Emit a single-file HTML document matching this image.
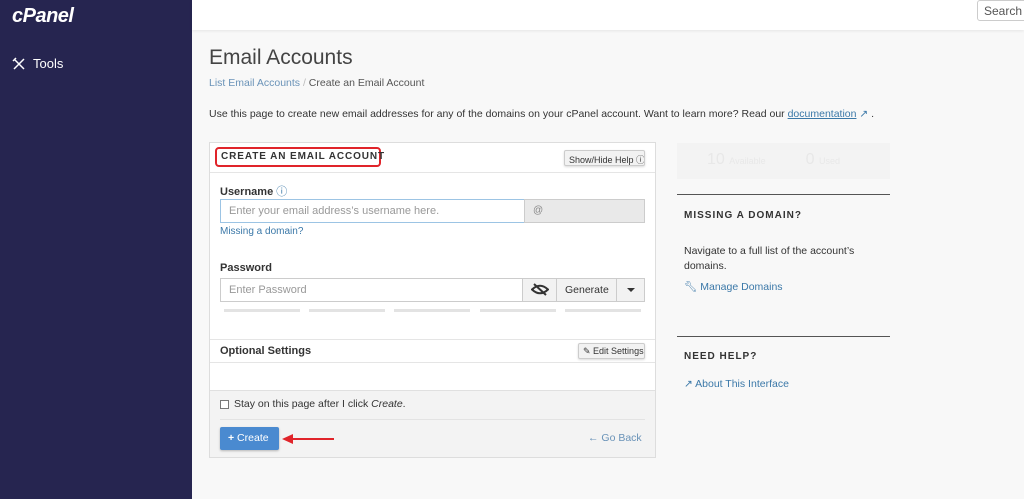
<!DOCTYPE html>
<html><head><meta charset="utf-8"><style>
*{box-sizing:border-box;margin:0;padding:0}
body{width:1024px;height:499px;overflow:hidden;font-family:"Liberation Sans",sans-serif;background:#f8f8f8;position:relative;color:#333}
.a{position:absolute;white-space:nowrap}
.side{left:0;top:0;width:192px;height:499px;background:#262550}
.top{left:192px;top:0;width:832px;height:30px;background:#fff;box-shadow:0 1px 3px rgba(0,0,0,.08)}
.link{color:#3b78a8}
.card{left:209px;top:142px;width:447px;height:316px;background:#fff;border:1px solid #ddd}
.inp{border:1px solid #ccc;height:24px;font-size:11px;color:#999;padding:5px 8px}
.btn{border:1px solid #ccc;background:#f2f2f2;font-size:9px;color:#333;border-radius:2px;box-shadow:0 1px 2px rgba(0,0,0,.15);overflow:hidden}
.bar{height:3px;background:#e3e3e3;top:309px;width:76px}
h5{font-size:10px;letter-spacing:1px;font-weight:bold;color:#333}
</style></head><body>
<div class="a side"></div>
<div class="a" style="left:12px;top:5px;color:#fff;font-size:20px;font-weight:bold;font-style:italic;letter-spacing:-0.5px">cPanel</div>
<svg class="a" style="left:12px;top:57px" width="14" height="14" viewBox="0 0 14 14" stroke="#fff" stroke-width="1.5" fill="none"><path d="M2 12L12 2M2 2l10 10M1 4l3-3"/></svg>
<div class="a" style="left:33px;top:56px;color:#fff;font-size:13px">Tools</div>
<div class="a top"></div>
<div class="a" style="left:977px;top:0;width:60px;height:21px;border:1px solid #ccc;border-radius:3px;background:#fff;font-size:12px;color:#555;padding:3px 6px;overflow:hidden">Search T</div>
<div class="a" style="left:209px;top:46px;font-size:21px;color:#444">Email Accounts</div>
<div class="a" style="left:209px;top:77px;font-size:10.5px;color:#555"><span class="link" style="color:#6a93b8">List Email Accounts</span> <span style="color:#bbb">/</span> Create an Email Account</div>
<div class="a" style="left:209px;top:108px;font-size:10.5px;color:#333">Use this page to create new email addresses for any of the domains on your cPanel account. Want to learn more? Read our <span class="link" style="text-decoration:underline">documentation</span> <span class="link">↗</span> .</div>
<div class="a card"></div>
<div class="a" style="left:210px;top:172px;width:445px;height:1px;background:#e5e5e5"></div>
<div class="a" style="left:215px;top:147px;width:166px;height:20px;border:2px solid #e0242a;border-radius:4px"></div>
<h5 class="a" style="left:221px;top:151px;letter-spacing:0.9px">CREATE AN EMAIL ACCOUNT</h5>
<div class="a btn" style="left:564px;top:150px;width:81px;height:16px;padding:2px 4px">Show/Hide Help ⓘ</div>
<div class="a" style="left:220px;top:183px;font-size:11px;font-weight:bold">Username <span style="color:#3b78a8;font-weight:normal">ⓘ</span></div>
<div class="a inp" style="left:220px;top:199px;width:305px;border-color:#9cc4e4">Enter your email address’s username here.</div>
<div class="a" style="left:524px;top:199px;width:121px;height:24px;background:#e9e9e9;border:1px solid #ccc;font-size:10px;color:#888;padding:5px 8px">@</div>
<div class="a link" style="left:220px;top:226px;font-size:10px">Missing a domain?</div>
<div class="a" style="left:220px;top:262px;font-size:11px;font-weight:bold">Password</div>
<div class="a inp" style="left:220px;top:278px;width:303px">Enter Password</div>
<div class="a" style="left:522px;top:278px;width:123px;height:24px;border:1px solid #ccc;background:#f2f2f2"></div>
<div class="a" style="left:556px;top:278px;width:1px;height:24px;background:#ccc"></div>
<div class="a" style="left:616px;top:278px;width:1px;height:24px;background:#ccc"></div>
<svg class="a" style="left:531px;top:283px" width="18" height="13" viewBox="0 0 18 13"><path d="M1 6.5Q9 -1 17 6.5Q9 14 1 6.5Z" fill="none" stroke="#333" stroke-width="2"/><path d="M3 1l12 11" stroke="#333" stroke-width="2"/></svg>
<div class="a" style="left:565px;top:284px;font-size:10.5px">Generate</div>
<div class="a" style="left:627px;top:288px;border:4px solid transparent;border-top:4px solid #333"></div>
<div class="a bar" style="left:224px"></div><div class="a bar" style="left:309px"></div><div class="a bar" style="left:394px"></div><div class="a bar" style="left:480px"></div><div class="a bar" style="left:565px"></div>
<div class="a" style="left:210px;top:339px;width:445px;height:1px;background:#e5e5e5"></div>
<div class="a" style="left:220px;top:345px;font-size:11px;font-weight:bold">Optional Settings</div>
<div class="a btn" style="left:578px;top:343px;width:67px;height:16px;padding:2px 4px">✎ Edit Settings</div>
<div class="a" style="left:210px;top:362px;width:445px;height:1px;background:#e5e5e5"></div>
<div class="a" style="left:210px;top:390px;width:445px;height:67px;background:#f3f3f3;border-top:1px solid #e0e0e0"></div>
<div class="a" style="left:220px;top:400px;width:9px;height:9px;border:1px solid #777;background:#fff"></div>
<div class="a" style="left:234px;top:398px;font-size:10.5px">Stay on this page after I click <i>Create</i>.</div>
<div class="a" style="left:220px;top:419px;width:425px;height:1px;background:#e3e3e3"></div>
<div class="a" style="left:220px;top:427px;width:59px;height:23px;background:#4a8ad0;border-radius:2px;color:#fff;font-size:10.5px;padding:5px 8px;box-shadow:0 1px 2px rgba(0,0,0,.25)"><b>+</b> Create</div>
<svg class="a" style="left:282px;top:433px" width="54" height="12" viewBox="0 0 54 12"><path d="M52 6H8" stroke="#e0242a" stroke-width="2"/><path d="M0 6L11 1V11Z" fill="#e0242a"/></svg>
<div class="a link" style="left:588px;top:432px;font-size:10.5px;color:#6a93b8">← Go Back</div>
<div class="a" style="left:677px;top:143px;width:213px;height:36px;background:#f3f3f3;font-size:16px;color:#e8e8e8;padding:8px 30px">10 <span style="font-size:9px">Available</span>&nbsp;&nbsp;&nbsp;&nbsp;&nbsp;&nbsp;&nbsp;&nbsp;&nbsp;0 <span style="font-size:9px">Used</span></div>
<div class="a" style="left:677px;top:194px;width:213px;height:1px;background:#555"></div>
<h5 class="a" style="left:684px;top:210px">MISSING A DOMAIN?</h5>
<div class="a" style="left:684px;top:244px;font-size:10.5px;line-height:15px;width:190px;white-space:normal">Navigate to a full list of the account’s domains.</div>
<div class="a link" style="left:684px;top:280px;font-size:10.5px">🔧︎ Manage Domains</div>
<div class="a" style="left:677px;top:336px;width:213px;height:1px;background:#555"></div>
<h5 class="a" style="left:684px;top:351px">NEED HELP?</h5>
<div class="a link" style="left:684px;top:378px;font-size:10.5px">↗ About This Interface</div>
</body></html>
